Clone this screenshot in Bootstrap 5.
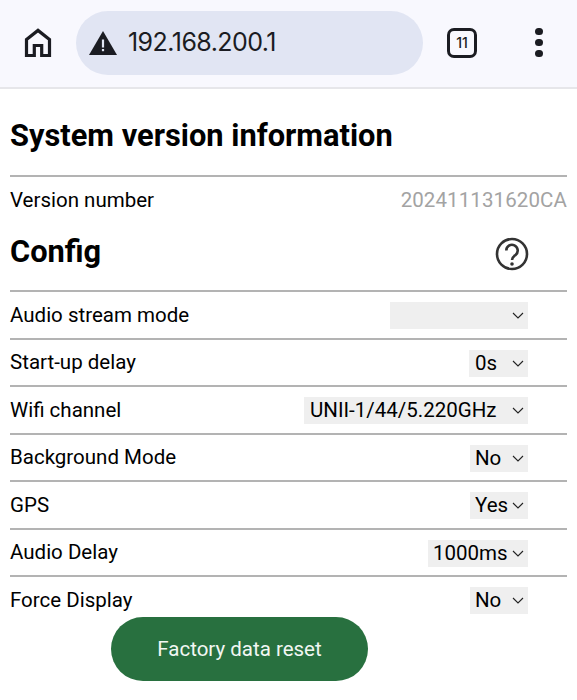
<!DOCTYPE html>
<html lang="en">
<head>
<meta charset="utf-8">
<title>Config</title>
<link href="https://cdn.jsdelivr.net/npm/bootstrap@5.3.0/dist/css/bootstrap.min.css" rel="stylesheet">
<style>
html,body{height:100%;overflow:hidden}
body{font-family:Roboto,"Liberation Sans",sans-serif;color:#000;background:#fff}
.browser-bar{height:89px;background:#f8f8fe;border-bottom:2px solid #e6e6ea;padding:0 0 2px 0}
.home-ico{margin-left:22px;width:32px;height:32px;flex:none}
.addr-pill{margin-left:22px;width:347px;height:64px;background:#e1e5f3;border-radius:32px;padding-left:13px;color:#1b1c22;font-family:Inter,Roboto,sans-serif;font-size:25px;letter-spacing:-.55px;gap:11px}
.tab-ico{margin-left:24px;width:30px;height:30px;border:3.5px solid #1b1c22;border-radius:7px;font-family:Inter,Roboto,sans-serif;font-size:14px;font-weight:500;color:#1b1c22;flex:none}
.menu-ico{margin-left:58px;gap:3.5px;flex:none}
.menu-ico i{display:block;width:7.5px;height:7.5px;border-radius:50%;background:#1b1c22}
.page-wrap{padding:0 10px 0 10px}
.sys-title{font-size:30.8px;font-weight:700;line-height:36px;margin:29px 0 21px}
.rule-row{border-top:2px solid #b3b3b3;display:flex;align-items:center;justify-content:space-between;font-size:20.5px;line-height:24px}
.ver-row{height:47px;padding-bottom:0}
.ver-val{color:#a3a3a3;font-size:20.5px;letter-spacing:.1px}
.cfg-head{height:68px;padding-right:38px}
.cfg-title{font-size:30.8px;font-weight:700;line-height:36px;margin:0 0 8px}
.cfg-row{height:47.5px;padding-right:39px;padding-bottom:0}
.cfg-sel{appearance:none;-webkit-appearance:none;border:0;border-radius:0;height:27px;margin-top:2px;padding:0 0 0 6px;font:20.5px/27px Roboto,sans-serif;color:#000;background-color:#efefef;background-image:url("data:image/svg+xml,%3Csvg xmlns='http://www.w3.org/2000/svg' width='12' height='7' viewBox='0 0 12 7'%3E%3Cpath d='M1 1l5 5 5-5' fill='none' stroke='%23222' stroke-width='1.1'/%3E%3C/svg%3E");background-repeat:no-repeat;background-position:right 4px center;text-align:left}
.sel-blank{width:138px}
.sel-zero{width:59px}
.sel-wifi{width:224px}
.sel-short{width:58px;padding-left:5px}
.sel-delay{width:100px;padding-left:5px}
.reset-wrap{padding-left:101px;margin-top:-6px}
.reset-btn{width:257px;height:64px;border-radius:32px;background:#28703f;color:#f2f7f3;border:0;font-size:20.5px;padding-top:8px}
.reset-btn:hover{background:#28703f;color:#f2f7f3}
</style>
</head>
<body>
<div class="browser-bar d-flex align-items-center">
  <svg class="home-ico" viewBox="0 0 32 32" aria-hidden="true"><path d="M4.5 28.5V12.6L16 3.4l11.5 9.2V28.5h-7.8V18.5h-7.4v10z" fill="none" stroke="#1b1c22" stroke-width="3.2" stroke-linejoin="miter"/></svg>
  <div class="addr-pill d-flex align-items-center">
    <svg width="28" height="24" viewBox="0 0 28 24" aria-hidden="true"><path d="M14 0 28 24H0z" fill="#1b1c22"/><rect x="12.9" y="8.5" width="2.2" height="8" fill="#e1e5f3"/><rect x="12.9" y="18" width="2.2" height="2.2" fill="#e1e5f3"/></svg>
    <span>192.168.200.1</span>
  </div>
  <div class="tab-ico d-flex align-items-center justify-content-center">11</div>
  <div class="menu-ico d-flex flex-column"><i></i><i></i><i></i></div>
</div>
<div class="page-wrap">
  <h1 class="sys-title">System version information</h1>
  <div class="rule-row ver-row"><span>Version number</span><span class="ver-val">202411131620CA</span></div>
  <div class="d-flex align-items-center justify-content-between cfg-head">
    <h2 class="cfg-title">Config</h2>
    <svg class="mb-1" width="34" height="34" viewBox="0 0 34 34" aria-hidden="true"><circle cx="17" cy="17" r="15" fill="none" stroke="#333" stroke-width="2.6"/><path d="M11.3 13.5a5.7 5.7 0 1 1 9.3 4.4c-2 1.6-3.6 2.6-3.6 5.1" fill="none" stroke="#333" stroke-width="2.6"/><circle cx="17" cy="27" r="1.8" fill="#333"/></svg>
  </div>
  <div class="rule-row cfg-row"><span>Audio stream mode</span><select class="cfg-sel sel-blank" aria-label="Audio stream mode"><option></option></select></div>
  <div class="rule-row cfg-row"><span>Start-up delay</span><select class="cfg-sel sel-zero" aria-label="Start-up delay"><option>0s</option></select></div>
  <div class="rule-row cfg-row"><span>Wifi channel</span><select class="cfg-sel sel-wifi" aria-label="Wifi channel"><option>UNII-1/44/5.220GHz</option></select></div>
  <div class="rule-row cfg-row"><span>Background Mode</span><select class="cfg-sel sel-short" aria-label="Background Mode"><option>No</option></select></div>
  <div class="rule-row cfg-row"><span>GPS</span><select class="cfg-sel sel-short" aria-label="GPS"><option>Yes</option></select></div>
  <div class="rule-row cfg-row"><span>Audio Delay</span><select class="cfg-sel sel-delay" aria-label="Audio Delay"><option>1000ms</option></select></div>
  <div class="rule-row cfg-row"><span>Force Display</span><select class="cfg-sel sel-short" aria-label="Force Display"><option>No</option></select></div>
  <div class="reset-wrap"><button type="button" class="btn reset-btn">Factory data reset</button></div>
</div>
<script src="https://cdn.jsdelivr.net/npm/bootstrap@5.3.0/dist/js/bootstrap.bundle.min.js"></script>
</body>
</html>
